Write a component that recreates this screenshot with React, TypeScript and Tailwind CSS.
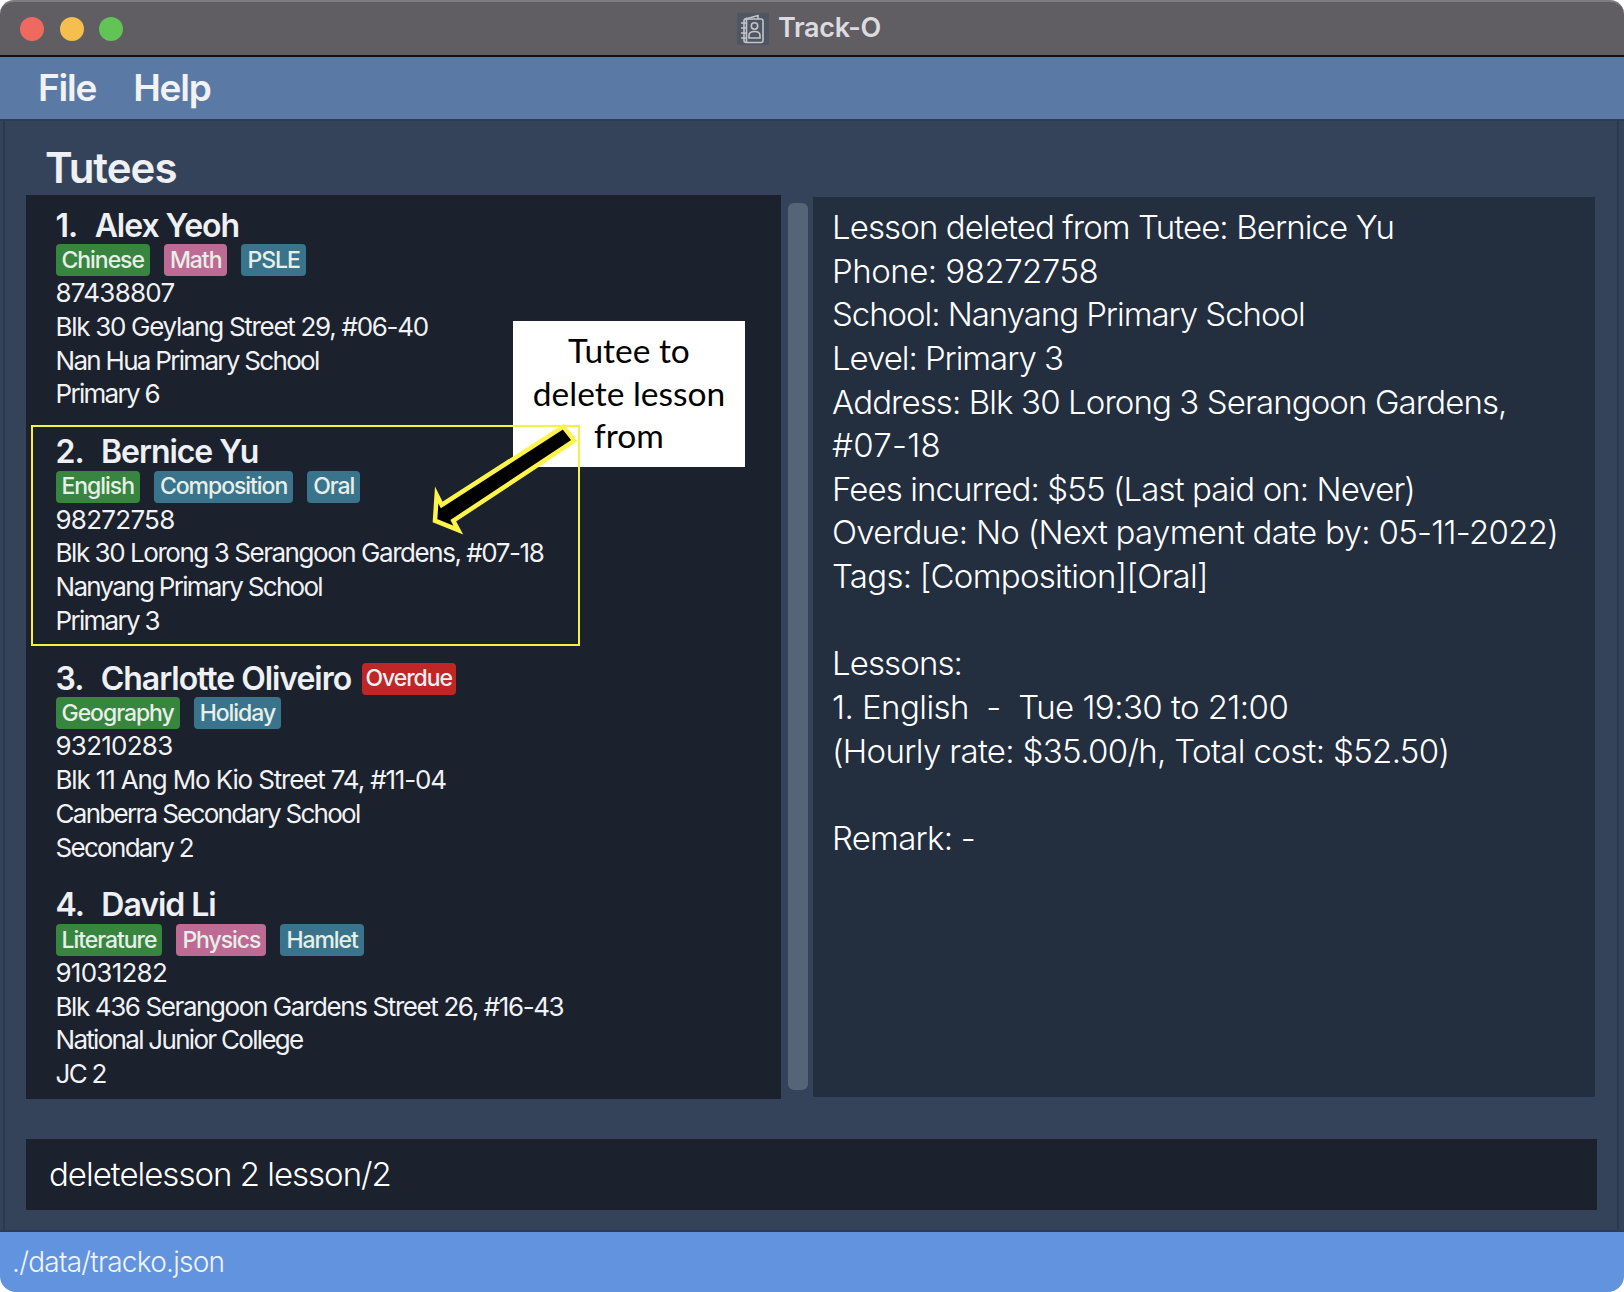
// App.tsx
const tutees = [
  {
    name: "Alex Yeoh",
    overdue: false,
    tags: [
      ["Chinese", "bg-[#38853f]"],
      ["Math", "bg-[#bd6a95]"],
      ["PSLE", "bg-[#3a748c]"],
    ],
    phone: "87438807",
    address: "Blk 30 Geylang Street 29, #06-40",
    addressTrack: "tracking-[-1.3px]",
    school: "Nan Hua Primary School",
    level: "Primary 6",
  },
  {
    name: "Bernice Yu",
    overdue: false,
    tags: [
      ["English", "bg-[#38853f]"],
      ["Composition", "bg-[#3a748c]"],
      ["Oral", "bg-[#3a748c]"],
    ],
    phone: "98272758",
    address: "Blk 30 Lorong 3 Serangoon Gardens, #07-18",
    addressTrack: "tracking-[-1.45px]",
    school: "Nanyang Primary School",
    level: "Primary 3",
  },
  {
    name: "Charlotte Oliveiro",
    overdue: true,
    tags: [
      ["Geography", "bg-[#38853f]"],
      ["Holiday", "bg-[#3a748c]"],
    ],
    phone: "93210283",
    address: "Blk 11 Ang Mo Kio Street 74, #11-04",
    addressTrack: "tracking-[-1.15px]",
    school: "Canberra Secondary School",
    level: "Secondary 2",
  },
  {
    name: "David Li",
    overdue: false,
    tags: [
      ["Literature", "bg-[#38853f]"],
      ["Physics", "bg-[#bd6a95]"],
      ["Hamlet", "bg-[#3a748c]"],
    ],
    phone: "91031282",
    address: "Blk 436 Serangoon Gardens Street 26, #16-43",
    addressTrack: "tracking-[-1.4px]",
    school: "National Junior College",
    level: "JC 2",
  },
];

// digits run wider than letters in the reference, so each line has its own tracking
const result = [
  ["Lesson deleted from Tutee: Bernice Yu", "tracking-[-0.9px]"],
  ["Phone: 98272758", "tracking-[-0.5px]"],
  ["School: Nanyang Primary School", "tracking-[-1.05px]"],
  ["Level: Primary 3", "tracking-[-1.05px]"],
  ["Address: Blk 30 Lorong 3 Serangoon Gardens,", "tracking-[-0.9px]"],
  ["#07-18", "tracking-[0.3px]"],
  ["Fees incurred: $55 (Last paid on: Never)", "tracking-[-0.9px]"],
  ["Overdue: No (Next payment date by: 05-11-2022)", "tracking-[-0.7px]"],
  ["Tags: [Composition][Oral]", "tracking-[-0.73px]"],
  ["", ""],
  ["Lessons:", "tracking-[-0.9px]"],
  ["1. English  -  Tue 19:30 to 21:00", "tracking-[-0.55px]"],
  ["(Hourly rate: $35.00/h, Total cost: $52.50)", "tracking-[-0.66px]"],
  ["", ""],
  ["Remark: -", "tracking-[-0.75px]"],
];

function BookIcon() {
  return (
    <svg width="32" height="32" viewBox="0 0 32 32" fill="none" stroke="#c4c5ca" strokeWidth="1.6">
      <rect x="0" y="0" width="32" height="32" fill="#4f5563" stroke="none" />
      <path d="M7 6.500 L21 2.500 V6" />
      <rect x="7" y="6" width="19" height="23.500" rx="2" />
      <path d="M9.500 4.500 V29" />
      <path d="M4 10h5M4 15h5M4 20h5M4 25h5" />
      <circle cx="17.500" cy="13" r="3.200" />
      <path d="M12 25v-2.500c0-2.500 2.200-4 5.500-4s5.500 1.500 5.500 4V25z" />
    </svg>
  );
}

export default function App() {
  return (
    <div className="relative flex h-[1292px] w-[1624px] flex-col overflow-hidden bg-white font-[Inter,sans-serif] text-white">
      {/* title bar */}
      <div className="relative flex h-[57px] shrink-0 items-center justify-center rounded-t-[14px] border-t-2 border-b-2 border-t-[#7d7c80] border-b-[#111114] bg-[#605e62]">
        <div className="absolute left-[20px] flex gap-[15.500px]">
          <div className="h-6 w-6 rounded-full bg-[#ee6a5f]" />
          <div className="h-6 w-6 rounded-full bg-[#f5be4f]" />
          <div className="h-6 w-6 rounded-full bg-[#61c454]" />
        </div>
        <div className="flex items-center gap-[9px] pr-[6px]">
          <BookIcon />
          <span className="text-[27px] font-semibold tracking-[-0.3px] text-[#dcdce0]">Track-O</span>
        </div>
      </div>

      {/* menu */}
      <div className="flex h-[64px] shrink-0 items-center gap-[37px] border-b-2 border-[#2a3d58] bg-[#5a7aa5] pl-[38px] text-[37px] font-semibold tracking-[-1.2px] text-[#f1f2f6]">
        <span>File</span>
        <span>Help</span>
      </div>

      {/* main */}
      <div className="flex min-h-0 flex-1 bg-[#34435a] pl-[3px] pr-[5px]">
        <div className="flex flex-1 flex-col border-x-2 border-[#2b394e] pl-[21px] pr-[20px]">
          <div className="h-[74px] shrink-0 pl-[19px] pt-[22px] text-[42px] leading-[50px] font-semibold tracking-[-1px] text-[#eef0f4]">
            Tutees
          </div>
          <div className="flex h-[904px] shrink-0">
            <div className="h-full w-[755px] shrink-0 bg-[#1b212d] pt-[12px]">
              {tutees.map((t, i) => (
                <div key={t.name} className="h-[226.600px] pl-[29.500px]">
                  <div className="flex h-[37px] items-center text-[32px] font-semibold tracking-[-1.05px] text-[#eef0f4]">
                    <span className="mr-[17.500px]">{i + 1}.</span>
                    <span>{t.name}</span>
                    {t.overdue && (
                      <span className="ml-[10.500px] flex h-[32px] items-center rounded-[4px] bg-[#bf2626] px-[4px] text-[23px] font-medium tracking-[-1.1px]">
                        Overdue
                      </span>
                    )}
                  </div>
                  <div className="flex gap-[14px]">
                    {t.tags.map(([label, color]) => (
                      <span
                        key={label}
                        className={`flex h-[32px] items-center rounded-[4px] px-[6px] text-[23px] font-medium tracking-[-1.05px] text-[#e6efe8] ${color}`}
                      >
                        {label}
                      </span>
                    ))}
                  </div>
                  <div className="h-[33.800px] text-[26px] leading-[33.800px] tracking-[-0.75px] text-[#f1f2f4]">{t.phone}</div>
                  <div className={`h-[33.800px] text-[26px] leading-[33.800px] text-[#f1f2f4] ${t.addressTrack}`}>{t.address}</div>
                  <div className="h-[33.800px] text-[26px] leading-[33.800px] tracking-[-1.7px] text-[#f1f2f4]">{t.school}</div>
                  <div className="h-[33.800px] text-[26px] leading-[33.800px] tracking-[-1.7px] text-[#f1f2f4]">{t.level}</div>
                </div>
              ))}
            </div>
            <div className="flex w-[32px] shrink-0 justify-center pt-[8px] pb-[9px] pl-[1px]">
              <div className="h-full w-[20px] rounded-[6px] bg-[#566478]" />
            </div>
            <div className="mt-[2px] h-[900px] w-[782px] shrink-0 bg-[#232e3e] pl-[19px] pt-[9px]">
              {result.map(([line, track], i) => (
                <div key={i} className={`h-[43.650px] whitespace-pre text-[33px] font-light leading-[43.650px] ${track}`}>
                  {line}
                </div>
              ))}
            </div>
          </div>
          <div className="mt-[40px] flex h-[71px] shrink-0 items-center bg-[#1b212d] pl-[23px] text-[33px] font-light tracking-[-1px]">
            deletelesson 2 lesson/2
          </div>
        </div>
      </div>

      {/* status bar */}
      <div className="flex h-[62px] shrink-0 items-center rounded-bl-[16px] rounded-br-[16px] border-t-2 border-[#2a3d58] bg-[#6193df] pl-[12px] text-[28px] font-light tracking-[-0.75px] text-[#f0f4fb]">
        ./data/tracko.json
      </div>

      {/* annotation over the list */}
      <div className="absolute left-[513px] top-[321px] flex h-[146px] w-[232px] flex-col items-center bg-white pt-[8px] font-[Lato,sans-serif] text-[33.500px] leading-[42.500px] text-black">
        <span>Tutee to</span>
        <span>delete lesson</span>
        <span>from</span>
      </div>
      <div className="absolute left-[31px] top-[425px] h-[221px] w-[549px] border-2 border-[#f4f04a]" />
      <svg className="absolute left-[425px] top-[415px]" width="165" height="125" viewBox="0 0 165 125">
        <polygon
          points="138.300,11.700 149.300,25.700 28.300,105.700 33.300,115 10,105.700 11.700,80 16.700,90"
          fill="#000"
          stroke="#fdf54a"
          strokeWidth="4.500"
        />
      </svg>
    </div>
  );
}
